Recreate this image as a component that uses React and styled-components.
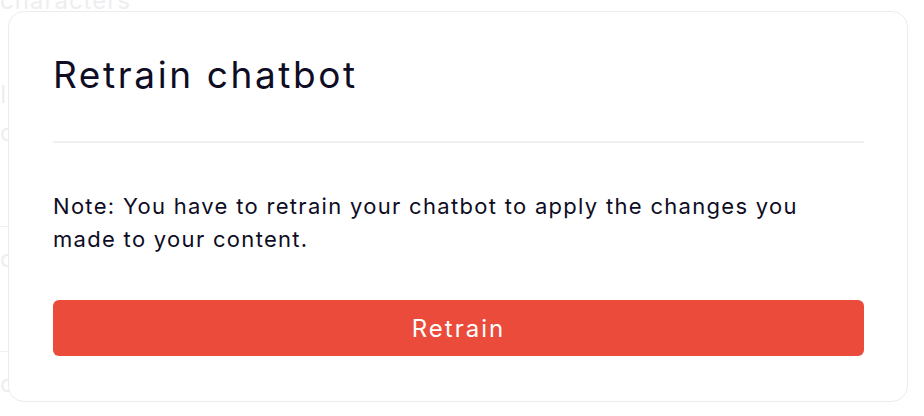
import styled, { createGlobalStyle } from 'styled-components';

const GlobalStyle = createGlobalStyle`
  html, body {
    margin: 0;
    padding: 0;
    background: #ffffff;
    font-family: Inter, "Noto Sans", sans-serif;
  }
`;

const Page = styled.div`
  position: relative;
  width: 924px;
  height: 416px;
  overflow: hidden;
  background: #ffffff;
`;

const Backdrop = styled.div`
  width: 420px;
  display: flex;
  flex-direction: column;
  color: #eeeef0;
  font-size: 24px;
  line-height: 24px;
`;

const FadedLabel = styled.div`
  margin-top: -11px;
  letter-spacing: 1px;
`;

const FadedField = styled.div`
  display: flex;
  flex-direction: column;
  gap: 14px;
  padding: ${(p) => p.$top}px 0 0 0;
  height: ${(p) => p.$height}px;
  box-sizing: border-box;
  border-bottom: ${(p) => (p.$line ? '1px solid #f0f0f2' : 'none')};
`;

const Card = styled.div`
  position: absolute;
  left: 8px;
  top: 11px;
  width: 900px;
  box-sizing: border-box;
  padding: 41px 43px 45px 44px;
  background: #ffffff;
  border: 1px solid #ececee;
  border-radius: 16px;
  color: #0e0d24;
`;

const Title = styled.h2`
  margin: 0;
  padding-bottom: 44px;
  font-size: 37px;
  line-height: 44px;
  font-weight: 400;
  letter-spacing: 2.6px;
  border-bottom: 2px solid #f0f0f2;
`;

const Note = styled.p`
  margin: 0;
  padding-top: 47px;
  font-size: 22px;
  line-height: 33px;
  letter-spacing: 1.3px;
`;

const RetrainButton = styled.button`
  display: block;
  width: 100%;
  height: 56px;
  margin-top: 44px;
  border: none;
  border-radius: 6px;
  background: #ea4b3a;
  color: #ffffff;
  font-family: inherit;
  font-size: 24px;
  letter-spacing: 2px;
  cursor: pointer;
`;

export default function App() {
  return (
    <Page>
      <GlobalStyle />
      <Backdrop>
        <FadedLabel>characters</FadedLabel>
        <FadedField $top={70} $height={214} $line>
          <span>Instructions</span>
          <span>content</span>
        </FadedField>
        <FadedField $top={20} $height={125} $line>
          <span>content</span>
        </FadedField>
        <FadedField $top={20} $height={60}>
          <span>content</span>
        </FadedField>
      </Backdrop>
      <Card>
        <Title>Retrain chatbot</Title>
        <Note>
          Note: You have to retrain your chatbot to apply the changes you made to your
          content.
        </Note>
        <RetrainButton>Retrain</RetrainButton>
      </Card>
    </Page>
  );
}
